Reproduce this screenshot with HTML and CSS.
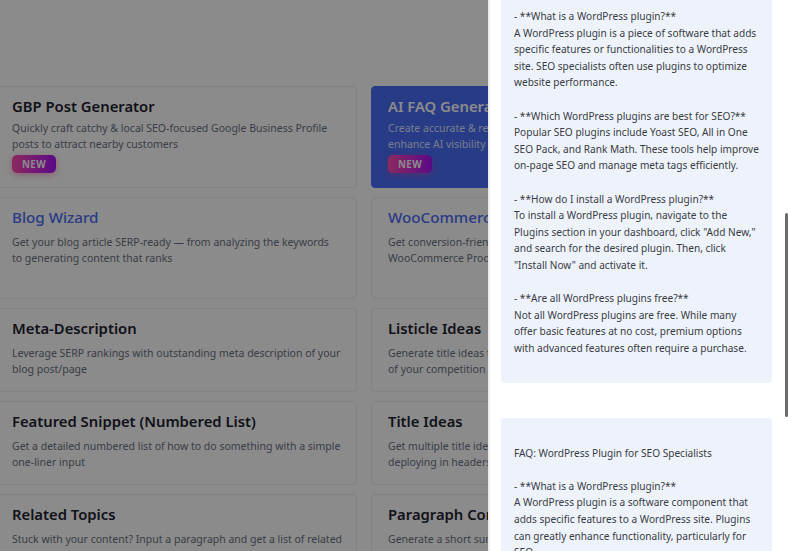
FILE: index.html
```html
<!DOCTYPE html>
<html lang="en">
<head>
    <meta charset="UTF-8">
    <meta name="viewport" content="width=device-width, initial-scale=1">
    <title>SEO Tools - FAQ Output</title>
    <link rel="stylesheet" href="styles.css">
</head>
<body>
    <div class="viewport">
        <main class="tools">
            <div class="card card-new">
                <h3 class="card-title">GBP Post Generator</h3>
                <p class="card-desc">Quickly craft catchy &amp; local SEO-focused Google Business Profile<br>posts to attract nearby customers</p>
                <span class="badge">NEW</span>
            </div>
            <div class="card card-new card-active">
                <h3 class="card-title">AI FAQ Generator</h3>
                <p class="card-desc">Create accurate &amp; relevant FAQs to<br>enhance AI visibility</p>
                <span class="badge">NEW</span>
            </div>
            <div class="card card-tall">
                <h3 class="card-title title-blue">Blog Wizard</h3>
                <p class="card-desc">Get your blog article SERP-ready &mdash; from analyzing the keywords<br>to generating content that ranks</p>
            </div>
            <div class="card card-tall">
                <h3 class="card-title title-blue">WooCommerce</h3>
                <p class="card-desc">Get conversion-friendly<br>WooCommerce Products</p>
            </div>
            <div class="card">
                <h3 class="card-title">Meta-Description</h3>
                <p class="card-desc">Leverage SERP rankings with outstanding meta description of your<br>blog post/page</p>
            </div>
            <div class="card">
                <h3 class="card-title">Listicle Ideas</h3>
                <p class="card-desc">Generate title ideas for<br>of your competition</p>
            </div>
            <div class="card">
                <h3 class="card-title">Featured Snippet (Numbered List)</h3>
                <p class="card-desc">Get a detailed numbered list of how to do something with a simple<br>one-liner input</p>
            </div>
            <div class="card">
                <h3 class="card-title">Title Ideas</h3>
                <p class="card-desc">Get multiple title ideas<br>deploying in headers</p>
            </div>
            <div class="card">
                <h3 class="card-title">Related Topics</h3>
                <p class="card-desc">Stuck with your content? Input a paragraph and get a list of related<br>topics to cover</p>
            </div>
            <div class="card">
                <h3 class="card-title">Paragraph Conclusion</h3>
                <p class="card-desc">Generate a short summary<br>in a few sentences</p>
            </div>
        </main>
    </div>

    <div class="backdrop"></div>

    <aside class="drawer">
        <div class="faq-box faq-box-first">- **What is a WordPress plugin?**
A WordPress plugin is a piece of software that adds
specific features or functionalities to a WordPress
site. SEO specialists often use plugins to optimize
website performance.

- **Which WordPress plugins are best for SEO?**
Popular SEO plugins include Yoast SEO, All in One
SEO Pack, and Rank Math. These tools help improve
on-page SEO and manage meta tags efficiently.

- **How do I install a WordPress plugin?**
To install a WordPress plugin, navigate to the
Plugins section in your dashboard, click "Add New,"
and search for the desired plugin. Then, click
"Install Now" and activate it.

- **Are all WordPress plugins free?**
Not all WordPress plugins are free. While many
offer basic features at no cost, premium options
with advanced features often require a purchase.

</div>
        <div class="faq-box">
FAQ: WordPress Plugin for SEO Specialists

- **What is a WordPress plugin?**
A WordPress plugin is a software component that
adds specific features to a WordPress site. Plugins
can greatly enhance functionality, particularly for
SEO.</div>
        <div class="scroll-thumb"></div>
    </aside>
</body>
</html>
```

FILE: styles.css
```css
:root {
    --page: #ffffff;
    --border: #eceef1;
    --title: #1f2230;
    --muted: #6b7280;
    --brand: #4a6cf7;
    --faq-bg: #eef3fb;
    --faq-text: #383b43;
}
body {
    margin: 0;
    background: var(--page);
    font-family: 'Noto Sans', 'Open Sans', Arial, sans-serif;
    overflow: hidden;
    height: 100vh;
}
/* the drawer covers everything right of 488px */
.viewport {
    width: 488px;
    height: 100vh;
    overflow: hidden;
}
.tools {
    display: grid;
    grid-template-columns: repeat(2, 362px);
    column-gap: 14px;
    row-gap: 9px;
    align-items: start;
    padding-top: 86px;
    margin-left: -5px;
}
.card {
    background: #fff;
    border: 1px solid var(--border);
    border-radius: 4px;
    padding: 9px 16px 14px;
    display: flex;
    flex-direction: column;
    align-items: flex-start;
}
.card-tall {
    min-height: 77px;
}
.card-title {
    margin: 0;
    font-size: 14.8px;
    font-weight: 600;
    line-height: 20px;
    color: var(--title);
    white-space: nowrap;
}
.title-blue {
    color: var(--brand);
    font-weight: 500;
    font-size: 15.2px;
}
.card-desc {
    margin: 7px 0 0;
    font-size: 10.5px;
    line-height: 16px;
    color: var(--muted);
    white-space: nowrap;
}
.card-new .card-desc {
    margin-top: 4px;
}
.card-active {
    background: var(--brand);
    border-color: var(--brand);
}
.card-active .card-title {
    color: #fff;
}
.card-active .card-desc {
    color: #dde4ff;
}
.badge {
    margin-top: 3px;
    height: 18px;
    padding: 0 10px;
    display: flex;
    align-items: center;
    border-radius: 5px;
    background: linear-gradient(90deg, #ff4db0, #a812f5);
    box-shadow: 0 2px 6px rgba(236, 72, 153, 0.45);
    color: #fff;
    font-size: 9.8px;
    font-weight: 700;
    letter-spacing: 0.4px;
}
.backdrop {
    position: fixed;
    inset: 0;
    background: rgba(0, 0, 0, 0.455);
}
.drawer {
    position: fixed;
    top: 0;
    right: 0;
    bottom: 0;
    width: 300px;
    background: #fff;
    border-left: 2px solid #ececec;
    padding: 0 16px 0 11px;
    box-sizing: border-box;
    display: flex;
    flex-direction: column;
    gap: 35px;
    overflow: hidden;
}
.faq-box {
    flex-shrink: 0;
    background: var(--faq-bg);
    border-radius: 4px;
    padding: 10px 13px;
    font-size: 10.1px;
    line-height: 16.6px;
    color: var(--faq-text);
    white-space: pre;
    overflow: hidden;
}
.faq-box-first {
    margin-top: -20px;
    padding-top: 28px;
}
.scroll-thumb {
    position: absolute;
    right: 0;
    top: 213px;
    width: 3px;
    height: 204px;
    border-radius: 2px;
    background: #6b6b6b;
}
```
